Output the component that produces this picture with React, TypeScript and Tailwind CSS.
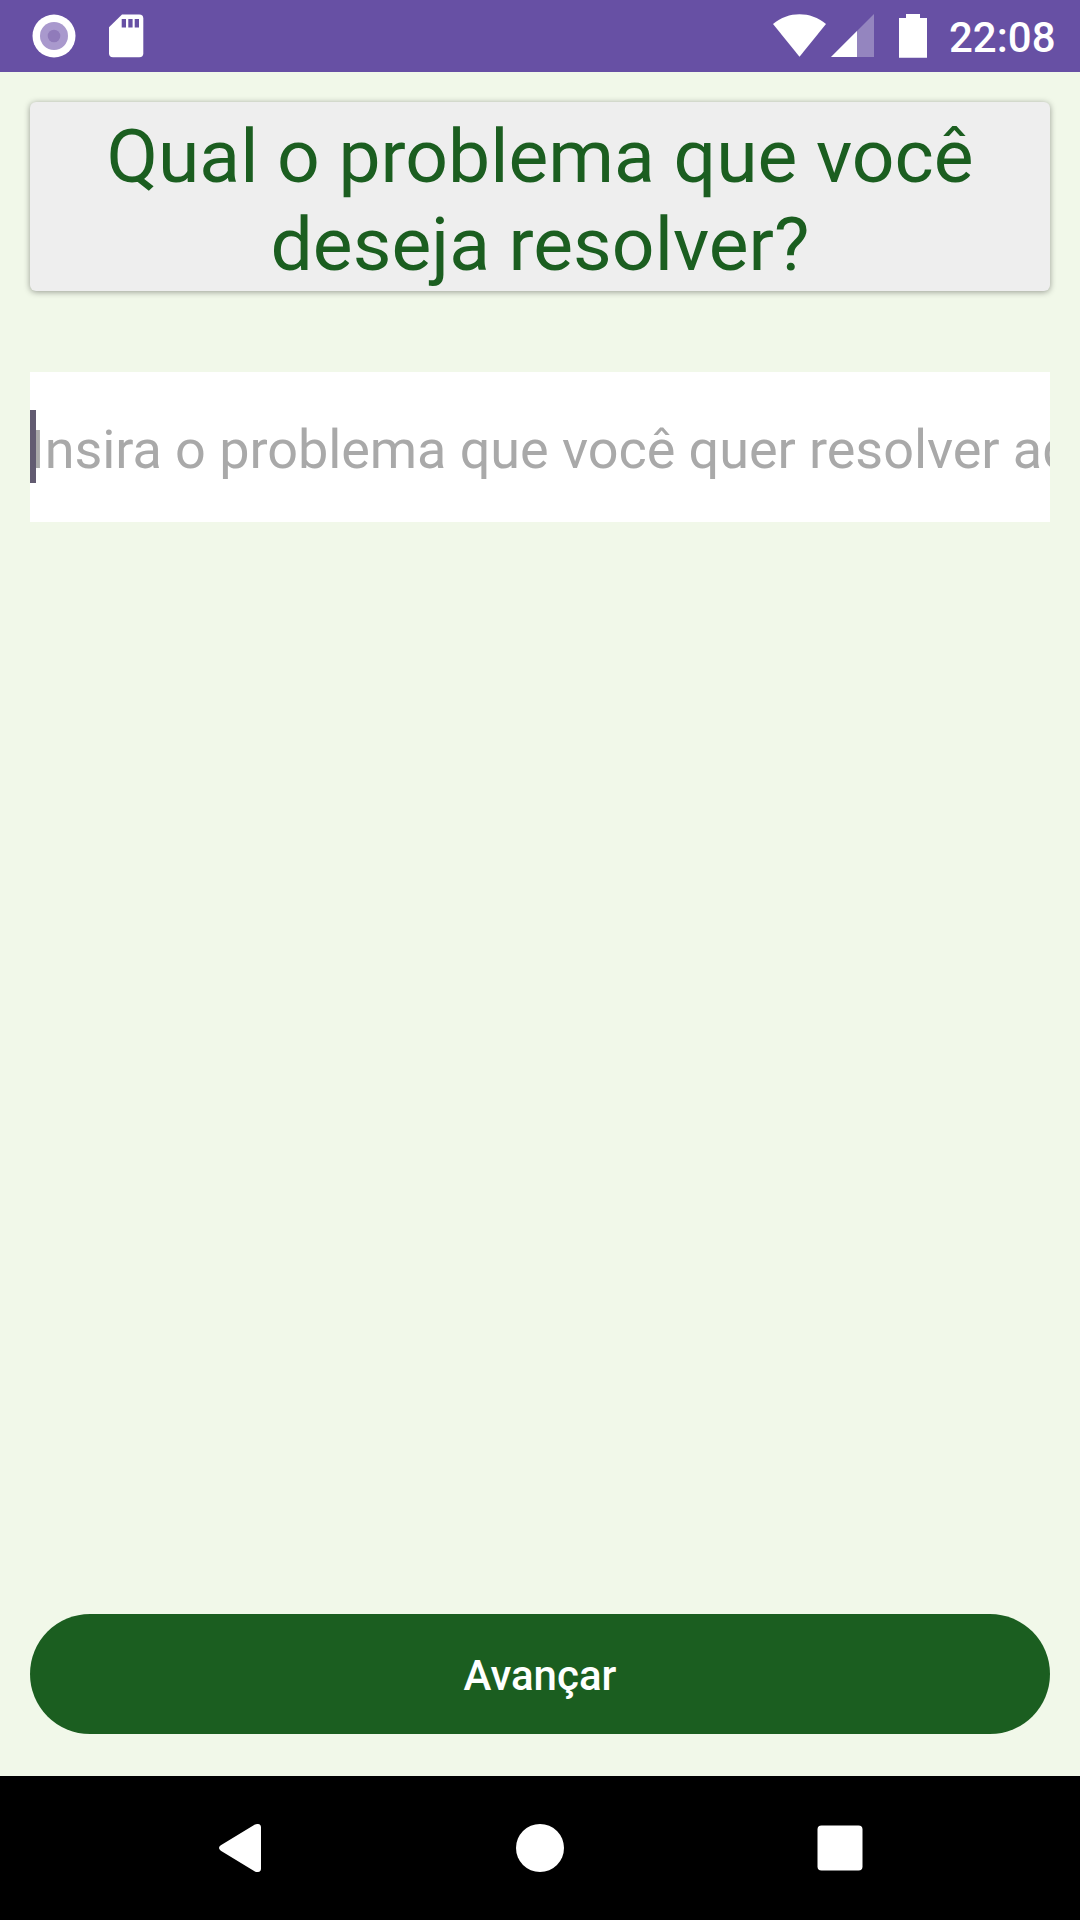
export default function App() {
  return (
    <div className="flex h-[1920px] w-[1080px] flex-col overflow-hidden bg-[#f1f8e9] font-['Roboto',sans-serif]">
      <header className="flex h-[72px] shrink-0 items-center justify-between bg-[#6750a4] text-white">
        <svg width="160" height="72" viewBox="0 0 160 72">
          <circle cx="54" cy="36" r="21.5" fill="#fff" />
          <circle cx="54" cy="36" r="14" fill="#a999cd" />
          <circle cx="54" cy="36" r="6.300" fill="#907bba" />
          <path d="M122 14.500h17.300a4 4 0 0 1 4 4v34.800a4 4 0 0 1-4 4h-26.300a4 4 0 0 1-4-4V27.300z" fill="#fff" />
          <path d="M121.700 19h4.300v8.500h-4.300zM128.300 19h4.300v8.500h-4.300zM134.700 19h4.300v8.500h-4.300z" fill="#6750a4" />
        </svg>
        <div className="flex items-center">
          <svg width="180" height="72" viewBox="769 0 180 72">
            <path d="M799.500 56.700L773 24C788.500 11 810.500 11 826 24z" fill="#fff" />
            <path d="M874 14v43h-43z" fill="#9485bf" />
            <path d="M857 31v26h-26z" fill="#fff" />
            <path d="M906 14h14v4h7v39.700h-28V18h7z" fill="#fff" />
          </svg>
          <span className="w-[131px] pt-[3px] text-[42px] font-medium leading-[72px]">22:08</span>
        </div>
      </header>
      <main className="flex flex-1 flex-col px-[30px] pt-[30px] pb-[42px]">
        <h1 className="h-[189px] rounded-[6px] bg-[#eeeeee] pt-[10px] text-center text-[75px] leading-[88px] tracking-[0.02px] text-[#1b5e20] shadow-[0_1px_6px_rgba(0,0,0,0.38)]">
          Qual o problema que você<br />deseja resolver?
        </h1>
        <div className="relative mt-[81px] h-[150px] overflow-hidden bg-white">
          <p className="whitespace-nowrap pt-[3px] text-[54px] leading-[150px] tracking-[-0.06px] text-[#a9a9a9]">
            Insira o problema que você quer resolver aqui
          </p>
          <span className="absolute top-[38px] left-0 h-[73px] w-[6px] bg-[#625b71]" />
        </div>
        <button className="mt-auto h-[120px] rounded-full bg-[#1b5e20] pt-[2px] text-[42px] font-medium text-white">Avançar</button>
      </main>
      <nav className="h-[144px] shrink-0 bg-black">
        <svg width="1080" height="144" viewBox="0 1776 1080 144" fill="#fff">
          <path d="M220.800 1845.300L254.500 1824.800Q256.500 1823.600 258 1824Q261 1824.400 261 1827.500V1868.500Q261 1871.600 258 1872Q256.500 1872.400 254.500 1871.200L220.800 1850.700Q217.200 1848 220.800 1845.300z" />
          <circle cx="540" cy="1848" r="24" />
          <rect x="817.5" y="1825.500" width="45" height="45" rx="4" />
        </svg>
      </nav>
    </div>
  );
}
